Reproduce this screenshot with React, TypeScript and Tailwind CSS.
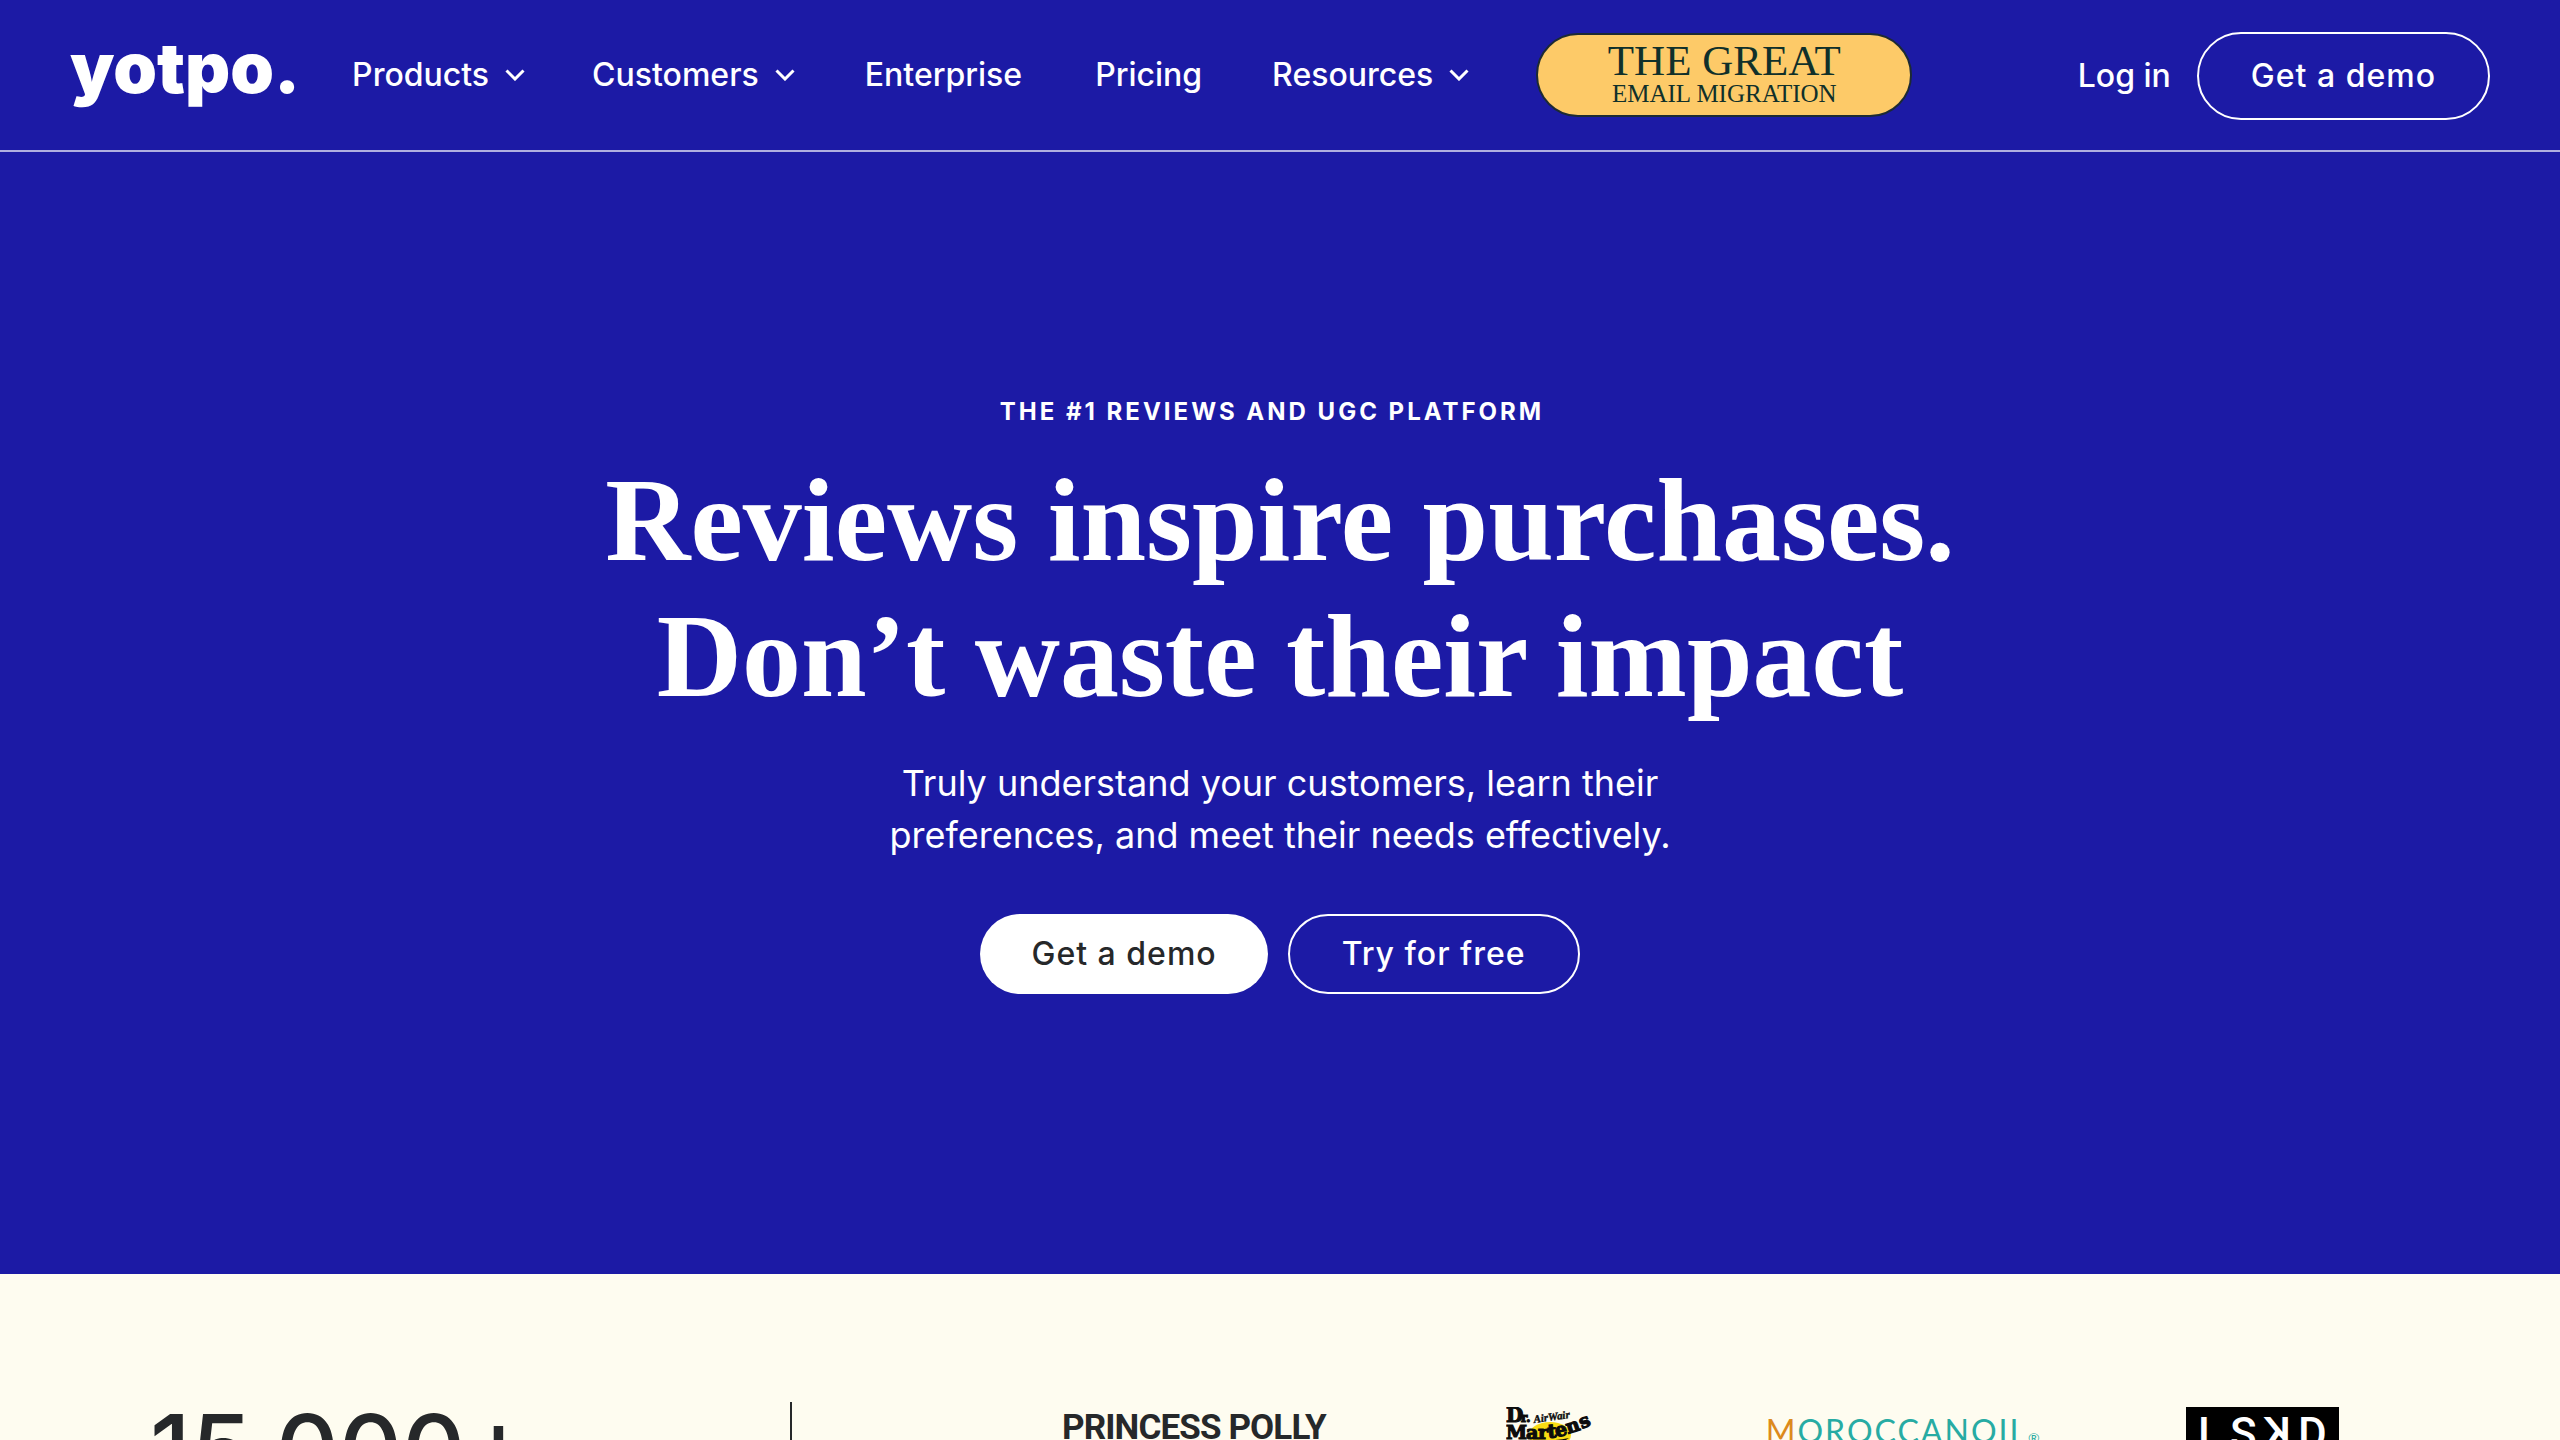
import clsx from 'clsx'

const navItems = [
  { label: 'Products', menu: true },
  { label: 'Customers', menu: true },
  { label: 'Enterprise', menu: false },
  { label: 'Pricing', menu: false },
  { label: 'Resources', menu: true },
]

function Chevron() {
  return (
    <svg width="20" height="12" viewBox="0 0 20 12" fill="none" aria-hidden="true">
      <path d="M1.5 1.5 10 10l8.500-8.500" stroke="currentColor" strokeWidth="3" />
    </svg>
  )
}

function Header() {
  return (
    <header className="flex h-[152px] shrink-0 items-center border-b-2 border-white/65 px-[70px]">
      <a href="#" className="mr-[52px] pb-3.5 text-[70px] leading-[70px] font-black">
        yotpo.
      </a>

      <nav className="flex items-center gap-[67px] text-[32px] leading-10 font-medium">
        {navItems.map((item) =>
          item.menu ? (
            <button key={item.label} type="button" className="flex items-center gap-4 font-medium">
              {item.label}
              <Chevron />
            </button>
          ) : (
            <a key={item.label} href="#" className="px-[3px]">
              {item.label}
            </a>
          ),
        )}
      </nav>

      <a
        href="#"
        className="ml-[67px] flex h-[84px] w-[376px] flex-col items-center justify-center rounded-full border-2 border-[#1d2a33] bg-[#fdca68] font-['Liberation_Serif'] text-[#10302a]"
      >
        <span className="text-[43px] leading-[38px]">THE GREAT</span>
        <span className="text-[25px] leading-7">EMAIL MIGRATION</span>
      </a>

      <div className="ml-auto flex items-center gap-[26px] pt-0.5 text-[32px] font-medium">
        <a href="#">Log in</a>
        <PillButton className="h-[88px] border-2 border-white px-[52px]">Get a demo</PillButton>
      </div>
    </header>
  )
}

function PillButton({ className, children }: { className?: string; children: string }) {
  return (
    <button
      type="button"
      className={clsx('rounded-full text-[32px] leading-10 font-medium tracking-[1px]', className)}
    >
      {children}
    </button>
  )
}

function Hero() {
  return (
    <section className="flex flex-col items-center pt-[242px] pb-[280px] text-center">
      <p className="pr-4 text-2xl leading-9 font-bold tracking-[3px]">THE #1 REVIEWS AND UGC PLATFORM</p>
      <h1 className="mt-[23px] font-['Liberation_Serif'] text-[118px] leading-[136px] font-bold">
        Reviews inspire purchases.
        <br />
        Don’t waste their impact
      </h1>
      <p className="mt-8 text-4xl leading-[52px]">
        Truly understand your customers, learn their
        <br />
        preferences, and meet their needs effectively.
      </p>
      <div className="mt-[53px] flex gap-5">
        <PillButton className="h-20 bg-white px-[51px] text-[#26282a]">Get a demo</PillButton>
        <PillButton className="h-20 border-2 border-white px-[52px]">Try for free</PillButton>
      </div>
    </section>
  )
}

function DrMartensLogo() {
  return (
    <svg width="90" height="60" viewBox="0 0 90 60" role="img" aria-label="Dr. Martens AirWair">
      <ellipse cx="44" cy="28" rx="21" ry="13" fill="#f9dc13" />
      <g fill="#0c0c0c" stroke="#0c0c0c" strokeWidth="1.2" fontFamily="DejaVu Serif" fontWeight="700">
        <text x="0" y="15" fontSize="20">D</text>
        <text x="15" y="15" fontSize="12">r.</text>
        <text x="28" y="16" fontSize="11" strokeWidth="0.4" fontFamily="Liberation Serif" fontStyle="italic" transform="rotate(-8 28 16)">
          AirWair
        </text>
        <text x="0" y="32" fontSize="19">M</text>
        <text x="20" y="32" fontSize="19">a</text>
        <text x="32" y="32" fontSize="19">r</text>
        <text x="42" y="31" fontSize="19" transform="rotate(-4 42 31)">t</text>
        <text x="50" y="30" fontSize="19" transform="rotate(-10 50 30)">e</text>
        <text x="62" y="27" fontSize="19" transform="rotate(-18 62 27)">n</text>
        <text x="76" y="22" fontSize="19" transform="rotate(-24 76 22)">s</text>
      </g>
      <path d="M26 37c8-4 24-3 37-6-5 3-8 6-10 10H28z" fill="#0c0c0c" />
    </svg>
  )
}

function LskdLogo() {
  return (
    <svg width="153" height="60" viewBox="0 0 153 60" role="img" aria-label="LSKD">
      <rect width="153" height="60" fill="#000" />
      <g fill="#fff" fontFamily="Roboto" fontSize="44" fontWeight="500">
        <text x="12" y="42">L</text>
        <text x="44" y="42">S</text>
        {/* the K in the brand mark faces left */}
        <text x="0" y="42" transform="translate(105 0) scale(-1 1)">K</text>
        <text x="112" y="42">D</text>
      </g>
    </svg>
  )
}

function Customers() {
  return (
    <section className="flex flex-1 items-start bg-[#fefcf0] pt-32 pl-[150px] text-[#26282a]">
      <div className="w-[640px] shrink-0">
        <p className="text-[98px] leading-[96px] font-medium">15,000+</p>
      </div>
      <div className="h-40 w-0.5 shrink-0 bg-[#26282a]" />
      <div className="ml-[270px] flex items-start pt-[5px]">
        <p className="font-['Roboto'] text-[35px] leading-[42px] font-bold tracking-tight whitespace-nowrap">
          PRINCESS POLLY
        </p>
        <div className="ml-[180px]">
          <DrMartensLogo />
        </div>
        <p className="ml-[170px] pt-1 font-['Lato'] text-[32px] leading-10 tracking-[2px] whitespace-nowrap text-[#27aba3]">
          <span className="text-[#dc8a1c]">M</span>OROCCANOIL
          <span className="text-sm">®</span>
        </p>
        <div className="ml-[144px]">
          <LskdLogo />
        </div>
      </div>
    </section>
  )
}

export default function App() {
  return (
    <div className="flex h-screen flex-col overflow-hidden bg-[#1c1aa5] font-['Inter'] text-white">
      <Header />
      <Hero />
      <Customers />
    </div>
  )
}
